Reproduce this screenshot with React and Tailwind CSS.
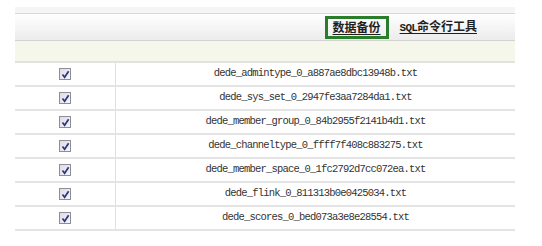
import React from "react";

const files = [
  "dede_admintype_0_a887ae8dbc13948b.txt",
  "dede_sys_set_0_2947fe3aa7284da1.txt",
  "dede_member_group_0_84b2955f2141b4d1.txt",
  "dede_channeltype_0_ffff7f408c883275.txt",
  "dede_member_space_0_1fc2792d7cc072ea.txt",
  "dede_flink_0_811313b0e0425034.txt",
  "dede_scores_0_bed073a3e8e28554.txt",
];

const CheckBox = () => (
  <span className="w-[12px] h-[12px] border border-[#8e8f96] bg-gradient-to-br from-[#dcdde6] to-[#f4f4f8] flex items-center justify-center">
    <svg width="9" height="9" viewBox="0 0 9 9">
      <path d="M1.5 4.5 L3.6 7.2 L7.6 1.3" stroke="#2b3580" strokeWidth="1.7" fill="none" />
    </svg>
  </span>
);

export default function App() {
  return (
    <div className="w-[542px] h-[246px] bg-white overflow-hidden">
      <div className="ml-[15px] w-[500px] pt-[7px]">
        {/* top strip */}
        <div className="h-[7px] bg-[#f5f5f5] border-b border-[#d9d9d9]" />

        {/* toolbar */}
        <div className="h-[27px] bg-gradient-to-b from-white to-[#ececec] border-b border-[#d2d2d2] flex items-center justify-end pr-[38px] gap-[11px] font-['Noto_Sans_CJK_SC',sans-serif] text-[12px] font-bold text-[#1f1f1f]">
          <div className="h-[23px] border-[3px] border-[#2a7d2a] px-[5px] flex items-center">
            <span className="underline underline-offset-2 leading-none">数据备份</span>
          </div>
          <span className="underline underline-offset-2 leading-none">
            <span className="font-['Liberation_Mono',monospace] text-[11px] tracking-[-0.8px]">SQL</span>命令行工具
          </span>
        </div>

        {/* beige band */}
        <div className="h-[22px] bg-[#f6f7eb] border-b-2 border-[#e2e2e2]" />

        {/* file rows */}
        <div className="flex flex-col">
          {files.map((f) => (
            <div key={f} className="h-[24px] flex border-b-2 border-[#e4e4e4]">
              <div className="w-[101px] border-r border-[#e0e0e0] flex items-center justify-center">
                <CheckBox />
              </div>
              <div className="flex-1 flex items-center justify-center font-['Liberation_Mono',monospace] text-[10.5px] tracking-[-0.8px] text-[#333]">
                {f}
              </div>
            </div>
          ))}
        </div>
      </div>
    </div>
  );
}
